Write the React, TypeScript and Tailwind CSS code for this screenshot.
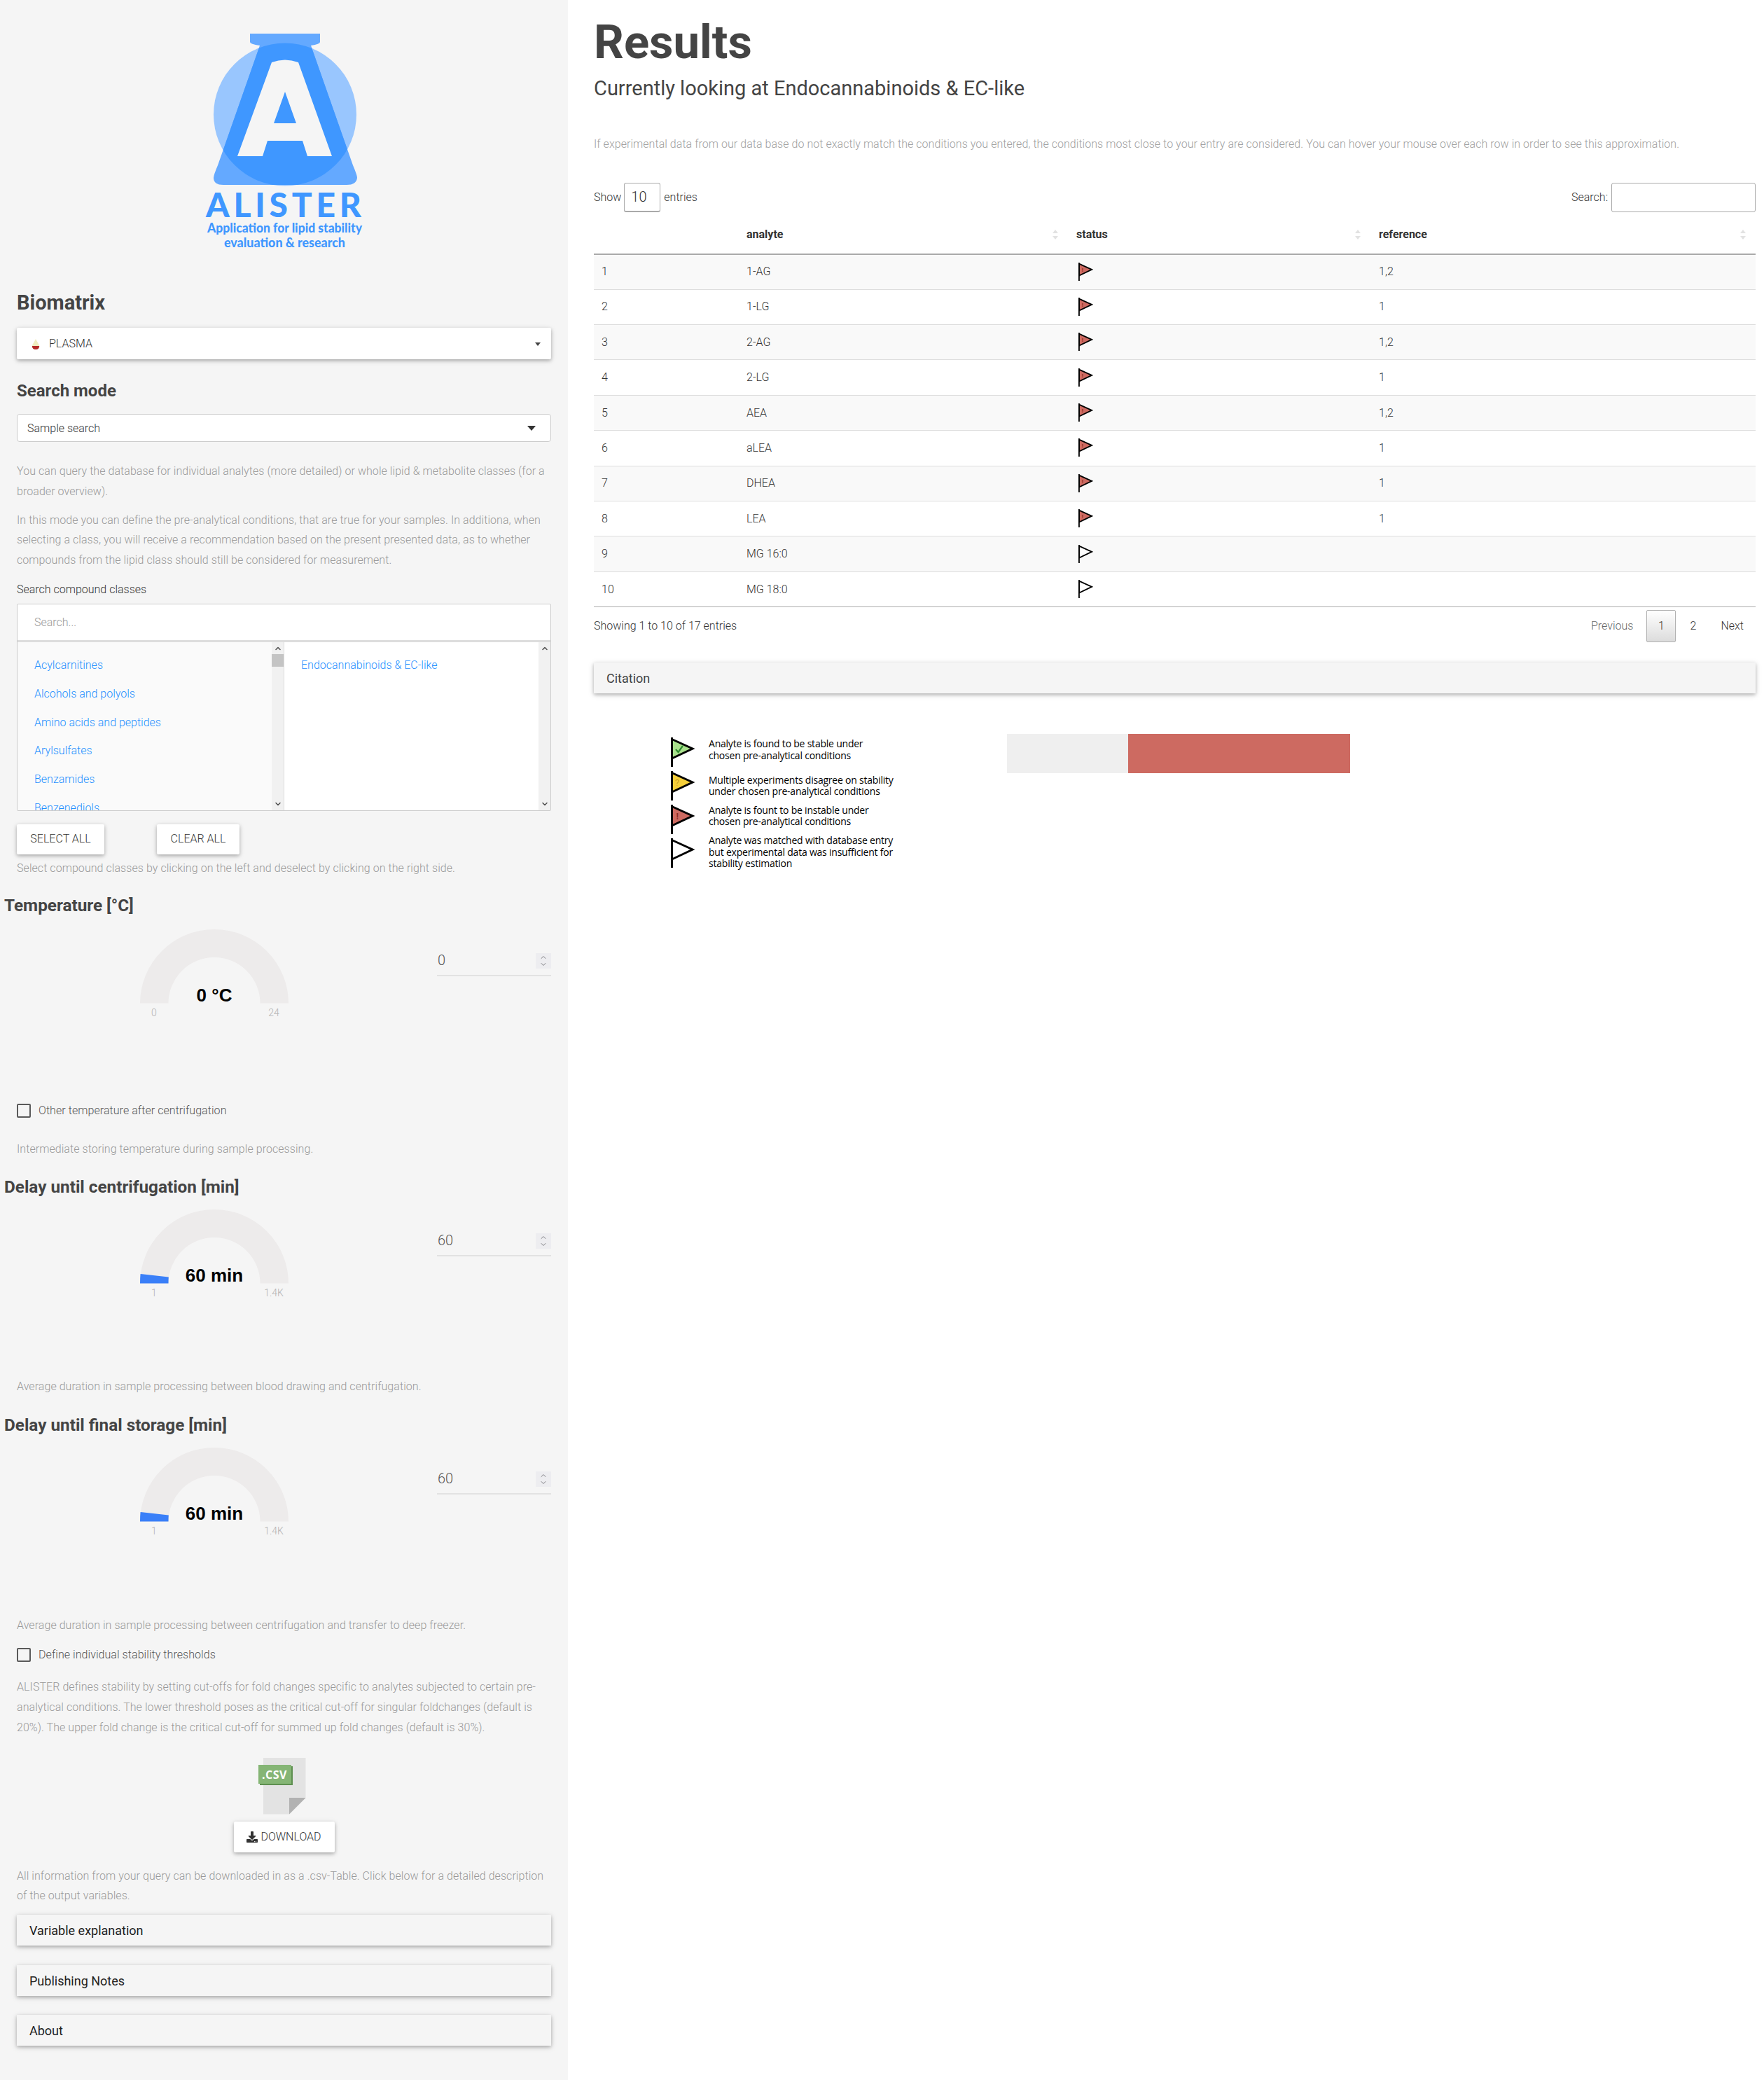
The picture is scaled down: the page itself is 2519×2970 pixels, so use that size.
import { ChevronDown, ChevronUp } from 'lucide-react';
import { FaDownload } from 'react-icons/fa';

const rows = [
  { id: 1, name: '1-AG', status: 'red', ref: '1,2' },
  { id: 2, name: '1-LG', status: 'red', ref: '1' },
  { id: 3, name: '2-AG', status: 'red', ref: '1,2' },
  { id: 4, name: '2-LG', status: 'red', ref: '1' },
  { id: 5, name: 'AEA', status: 'red', ref: '1,2' },
  { id: 6, name: 'aLEA', status: 'red', ref: '1' },
  { id: 7, name: 'DHEA', status: 'red', ref: '1' },
  { id: 8, name: 'LEA', status: 'red', ref: '1' },
  { id: 9, name: 'MG 16:0', status: 'none', ref: '' },
  { id: 10, name: 'MG 18:0', status: 'none', ref: '' },
];

const classes = ['Acylcarnitines', 'Alcohols and polyols', 'Amino acids and peptides', 'Arylsulfates', 'Benzamides', 'Benzenediols'];

const cardShadow = 'shadow-[0_2px_5px_rgba(0,0,0,0.26),0_2px_10px_rgba(0,0,0,0.1)]';

function Logo() {
  const flask = 'M356 48 H456 V60 Q456 63 443 65 L503 236 Q509 250 509 254 Q508 264 494 264 H318 Q304 264 304 254 Q304 250 310 236 L370 65 Q356 63 356 60 Z';
  const letter = 'M387 89 Q406 82 425 89 L473 223 H438 L431 201 H381 L374 223 H338 Z M406 131 L390 176 H422 Z';
  return (
    <svg width="230" height="320" viewBox="290 40 230 320">
      <defs>
        <clipPath id="flask-clip">
          <path d={flask} />
        </clipPath>
      </defs>
      <circle cx="406" cy="163.5" r="102" fill="#99c6fe" />
      <path d={flask} fill="#64a9ff" />
      <circle cx="406" cy="163.5" r="102" fill="#3f97ff" clipPath="url(#flask-clip)" />
      <path d={letter} fill="#f5f5f5" fillRule="evenodd" />
      <g fill="#3f97ff" fontFamily="Lato, sans-serif" fontWeight="900">
        <text x="293" y="310" fontSize="48" textLength="222" lengthAdjust="spacing">ALISTER</text>
        <text x="295" y="332" fontSize="19" textLength="221" lengthAdjust="spacingAndGlyphs">Application for lipid stability</text>
        <text x="319" y="353" fontSize="19" textLength="173" lengthAdjust="spacingAndGlyphs">evaluation &amp; research</text>
      </g>
    </svg>
  );
}

function Flag({ kind, className }: { kind: string; className: string }) {
  const fill = kind === 'green' ? '#a9e08c' : kind === 'yellow' ? '#f5cf3a' : kind === 'red' ? '#cd6a61' : '#ffffff';
  return (
    <svg viewBox="0 0 34 42" className={className}>
      <polygon points="1.5,2.5 31,16 1.5,30" fill={fill} stroke="#000" strokeWidth="3" />
      <line x1="1.5" y1="0" x2="1.5" y2="42" stroke="#000" strokeWidth="3" />
      {kind === 'green' && <path d="M7 17 L10.5 21 L17 12" fill="none" stroke="#2e8b2e" strokeWidth="2.2" />}
      {kind === 'yellow' && <text x="6" y="21" fontSize="13" fill="#b8901c" fontFamily="Roboto, sans-serif">?</text>}
      {kind === 'red' && <text x="7.5" y="21" fontSize="13" fill="#8a2a24" fontFamily="Roboto, sans-serif" fontWeight="700">!</text>}
    </svg>
  );
}

function Gauge({ value, min, max, filled }: { value: string; min: string; max: string; filled?: boolean }) {
  return (
    <svg width="212" height="130" viewBox="0 0 212 130" className="shrink-0">
      <path d="M0 105.5 A106 105.5 0 0 1 212 105.5 H171.5 A65.5 65.5 0 0 0 40.5 105.5 Z" fill="#edebeb" />
      {filled && <path d="M0 105.5 Q0 98 0.6 92 L40.8 96.5 Q40.5 101 40.5 105.5 Z" fill="#3a7ff8" />}
      <text x="106" y="103" textAnchor="middle" fontSize="26" fontWeight="700" fontFamily="Liberation Sans, sans-serif" fill="#010101">{value}</text>
      <text x="20" y="124" textAnchor="middle" fontSize="14" fontFamily="Roboto, sans-serif" fill="#b3b3b3">{min}</text>
      <text x="191" y="124" textAnchor="middle" fontSize="14" fontFamily="Roboto, sans-serif" fill="#b3b3b3">{max}</text>
    </svg>
  );
}

function GaugeRow({ value, min, max, input, filled, height }: { value: string; min: string; max: string; input: string; filled?: boolean; height: string }) {
  return (
    <div className={`flex items-start ${height}`}>
      <div className="ml-[176px]">
        <Gauge value={value} min={min} max={max} filled={filled} />
      </div>
      <div className="ml-auto mt-[34px] flex h-[33px] w-[163px] items-start justify-between border-b-2 border-[#e2e2e2] pl-px">
        <span className="text-[20px] leading-[20px] text-[#555]">{input}</span>
        <div className="flex h-[22px] w-[22px] flex-col items-center justify-center bg-[#ededf0] text-[#6f6f74]">
          <ChevronUp size={12} strokeWidth={1.8} className="-mb-[1px]" />
          <ChevronDown size={12} strokeWidth={1.8} className="-mt-[1px]" />
        </div>
      </div>
    </div>
  );
}

function Help({ children, className = '' }: { children: React.ReactNode; className?: string }) {
  return <p className={`text-[16px] leading-[28.8px] tracking-[0.06px] text-[#999] ${className}`}>{children}</p>;
}

function SectionTitle({ children, className = '' }: { children: React.ReactNode; className?: string }) {
  return <h2 className={`-ml-[18px] text-[24.3px] font-bold leading-[30px] text-[#444] ${className}`}>{children}</h2>;
}

function Check({ label, className = '' }: { label: string; className?: string }) {
  return (
    <label className={`flex h-[20px] items-center gap-[11px] ${className}`}>
      <span className="h-[20px] w-[20px] rounded-[2px] border-2 border-[#5a5a5a]" />
      <span className="text-[16px] tracking-[0.06px] text-[#555]">{label}</span>
    </label>
  );
}

function Accordion({ title, className = '' }: { title: string; className?: string }) {
  return (
    <div className={`flex h-[44px] items-center bg-[#f5f5f5] px-[18px] text-[18px] font-normal text-[#222] ${cardShadow} ${className}`}>
      {title}
    </div>
  );
}

function ListScrollbar() {
  return (
    <div className="flex h-full w-[17px] shrink-0 flex-col items-center justify-between bg-[#f1f1f1] py-[3px] text-[#505050]">
      <ChevronUp size={12} strokeWidth={3} />
      <ChevronDown size={12} strokeWidth={3} />
    </div>
  );
}

function SortArrows() {
  return (
    <span className="flex flex-col gap-[4px]">
      <span className="h-0 w-0 border-x-[4px] border-b-[5px] border-x-transparent border-b-[#e2e2e2]" />
      <span className="h-0 w-0 border-x-[4px] border-t-[5px] border-x-transparent border-t-[#e2e2e2]" />
    </span>
  );
}

function HeaderCell({ label }: { label: string }) {
  return (
    <th className="pl-3 pr-[14px] pt-[6px] text-left text-[16px] font-bold text-[#333]">
      <div className="flex items-center justify-between">
        <span>{label}</span>
        <SortArrows />
      </div>
    </th>
  );
}

function LegendRow({ kind, lines, className = '' }: { kind: string; lines: string[]; className?: string }) {
  return (
    <div className="flex h-[42px] items-center gap-[20px]">
      <Flag kind={kind} className="h-[42px] w-[34px] shrink-0" />
      <div className={`font-['Open_Sans',sans-serif] text-[14px] font-normal leading-[16.5px] tracking-[-0.22px] text-black ${className}`}>
        {lines.map(line => (
          <div key={line}>{line}</div>
        ))}
      </div>
    </div>
  );
}

function Sidebar() {
  return (
    <aside className="h-[2970px] w-[811px] shrink-0 bg-[#f5f5f5] px-6 pt-[40px]">
      <div className="flex justify-center">
        <Logo />
      </div>

      <h1 className="mt-[54px] text-[29px] font-bold leading-[36px] text-[#444]">Biomatrix</h1>
      <div className={`mt-[18px] flex h-[45px] items-center justify-between rounded-[2px] bg-white pl-[21px] pr-[15px] pt-px ${cardShadow}`}>
        <span className="flex items-center gap-[13px] text-[16px] text-[#333]">
          <svg width="12" height="15" viewBox="0 0 12 15">
            <path d="M6 0 L11 9 H1 Z M1 9 H11 Q11.5 10 11 12 Q10 15 6 15 Q2 15 1 12 Q0.5 10 1 9 Z" fill="#efeec0" />
            <path d="M0.8 10 H11.2 Q11 15 6 15 Q1 15 0.8 10 Z" fill="#b52b27" />
          </svg>
          PLASMA
        </span>
        <span className="h-0 w-0 border-x-[4px] border-t-[5px] border-x-transparent border-t-[#444]" />
      </div>

      <h2 className="mt-[30px] text-[24px] font-bold leading-[30px] text-[#444]">Search mode</h2>
      <div className="mt-[18px] flex h-[40px] items-center justify-between rounded-[4px] border border-[#ccc] bg-white pl-[14px] pr-[21px] pt-px text-[16px] text-[#333]">
        Sample search
        <span className="h-0 w-0 border-x-[6px] border-t-[7px] border-x-transparent border-t-[#333]" />
      </div>

      <Help className="mt-[28px]">
        You can query the database for individual analytes (more detailed) or whole lipid &amp; metabolite classes (for a broader overview).
      </Help>
      <Help className="mt-[12px]">
        In this mode you can define the pre-analytical conditions, that are true for your samples. In additiona, when selecting a class, you will receive a recommendation based on the present presented data, as to whether compounds from the lipid class should still be considered for measurement.
      </Help>

      <div className="mt-[15px] text-[16px] leading-[24px] text-[#333]">Search compound classes</div>
      <div className="mt-[8px] h-[296px] overflow-hidden rounded-[2px] border border-[#ccc] bg-white">
        <div className="flex h-[54px] items-center border-b-[3px] border-[#ddd] pl-[24px] pt-[2px] text-[16px] text-[#999]">Search...</div>
        <div className="flex h-[240px]">
          <div className="flex w-[381px] border-r border-[#ddd] bg-[#fafafa]">
            <div className="flex-1 overflow-hidden pl-[24px] pt-[13px] text-[16px] leading-[40.8px] text-[#1e90ff]">
              {classes.map(c => (
                <div key={c}>{c}</div>
              ))}
            </div>
            <div className="relative">
              <ListScrollbar />
              <div className="absolute left-0 top-[17px] h-[18px] w-[17px] bg-[#c4c4c4]" />
            </div>
          </div>
          <div className="flex flex-1">
            <div className="flex-1 pl-[24px] pt-[13px] text-[16px] leading-[40.8px] text-[#1e90ff]">Endocannabinoids &amp; EC-like</div>
            <ListScrollbar />
          </div>
        </div>
      </div>

      <div className="mt-[19px] flex gap-[75px]">
        <button className={`h-[43px] w-[125px] rounded-[2px] bg-white text-[16px] text-[#333] ${cardShadow}`}>SELECT ALL</button>
        <button className={`h-[43px] w-[118px] rounded-[2px] bg-white text-[16px] text-[#333] ${cardShadow}`}>CLEAR ALL</button>
      </div>
      <Help className="mt-[6px]">Select compound classes by clicking on the left and deselect by clicking on the right side.</Help>

      <SectionTitle className="mt-[23px]">Temperature [°C]</SectionTitle>
      <div className="mt-[19px]">
        <GaugeRow value="0 °C" min="0" max="24" input="0" height="h-[249px]" />
      </div>
      <Check label="Other temperature after centrifugation" />
      <Help className="mt-[31px]">Intermediate storing temperature during sample processing.</Help>

      <SectionTitle className="mt-[24px]">Delay until centrifugation [min]</SectionTitle>
      <div className="mt-[17px]">
        <GaugeRow value="60 min" min="1" max="1.4K" input="60" filled height="h-[239px]" />
      </div>
      <Help>Average duration in sample processing between blood drawing and centrifugation.</Help>

      <SectionTitle className="mt-[26px]">Delay until final storage [min]</SectionTitle>
      <div className="mt-[17px]">
        <GaugeRow value="60 min" min="1" max="1.4K" input="60" filled height="h-[240px]" />
      </div>
      <Help>Average duration in sample processing between centrifugation and transfer to deep freezer.</Help>

      <Check label="Define individual stability thresholds" className="mt-[17px]" />
      <Help className="mt-[22px]">
        ALISTER defines stability by setting cut-offs for fold changes specific to analytes subjected to certain pre-analytical conditions. The lower threshold poses as the critical cut-off for singular foldchanges (default is 20%). The upper fold change is the critical cut-off for summed up fold changes (default is 30%).
      </Help>

      <div className="mt-[28px] flex justify-center">
        <svg width="77" height="81" viewBox="367 2510 77 81">
          <path d="M376 2510 H436.5 V2567 L413 2590.5 H376 Z" fill="#e3e3e3" />
          <path d="M413 2567 H436.5 L413 2590.5 Z" fill="#b2b2b2" />
          <rect x="371" y="2522" width="47" height="27" fill="#5e8f50" />
          <rect x="369" y="2520" width="47" height="27" fill="#85b575" />
          <text x="374" y="2540" fontSize="16" fontWeight="700" fontFamily="Open Sans, sans-serif" fill="#fff" letterSpacing="0.5">.CSV</text>
        </svg>
      </div>
      <div className="mt-[10px] flex justify-center">
        <button className={`flex h-[44px] w-[144px] items-center justify-center gap-[4px] rounded-[2px] bg-white text-[16px] text-[#333] ${cardShadow}`}>
          <FaDownload size={16} />
          DOWNLOAD
        </button>
      </div>
      <Help className="mt-[20px]">
        All information from your query can be downloaded in as a .csv-Table. Click below for a detailed description of the output variables.
      </Help>

      <Accordion title="Variable explanation" className="mt-[12px]" />
      <Accordion title="Publishing Notes" className="mt-[28px]" />
      <Accordion title="About" className="mt-[27px]" />
    </aside>
  );
}

function Results() {
  return (
    <main className="flex-1 bg-white pl-[37px] pr-[12px] pt-[20px] text-[#333]">
      <h1 className="text-[67px] font-bold leading-[80px] text-[#444]">Results</h1>
      <h2 className="mt-[6px] text-[29px] font-normal leading-[40px] text-[#444]">Currently looking at Endocannabinoids &amp; EC-like</h2>
      <p className="mt-[46px] text-[16px] leading-[28.8px] tracking-[0.045px] text-[#a0a0a0]">
        If experimental data from our data base do not exactly match the conditions you entered, the conditions most close to your entry are considered. You can hover your mouse over each row in order to see this approximation.
      </p>

      <div className="mt-[40px] flex h-[42px] items-center justify-between text-[16px]">
        <div className="flex items-center">
          Show
          <span className="ml-[4px] mr-[5px] flex h-[42px] w-[52px] items-center rounded-[3px] border border-b-2 border-[#aaa] pl-[9px] text-[20px]">10</span>
          entries
        </div>
        <div className="flex items-center gap-[5px]">
          Search:
          <span className="h-[42px] w-[206px] rounded-[3px] border border-[#aaa]" />
        </div>
      </div>

      <table className="w-full table-fixed border-collapse">
        <colgroup>
          <col className="w-[206px]" />
          <col className="w-[471px]" />
          <col className="w-[432px]" />
          <col />
        </colgroup>
        <thead>
          <tr className="h-[60px] border-b-2 border-[#aaa]">
            <th />
            <HeaderCell label="analyte" />
            <HeaderCell label="status" />
            <HeaderCell label="reference" />
          </tr>
        </thead>
        <tbody>
          {rows.map(r => (
            <tr key={r.id} className={`h-[50.4px] border-b border-[#ddd] text-[16px] last:border-[#aaa] ${r.id % 2 === 1 ? 'bg-[#f9f9f9]' : 'bg-white'}`}>
              <td className="pl-[11px]">{r.id}</td>
              <td className="pl-3">{r.name}</td>
              <td className="pl-[15px]">
                <Flag kind={r.status} className="-mt-[1px] h-[26px] w-[21px]" />
              </td>
              <td className="pl-3">{r.ref}</td>
            </tr>
          ))}
        </tbody>
      </table>

      <div className="mt-[4px] flex h-[46px] items-center justify-between text-[16px]">
        <span>Showing 1 to 10 of 17 entries</span>
        <div className="mr-[17px] flex items-center">
          <span className="text-[#666]">Previous</span>
          <span className="ml-[19px] flex h-[46px] w-[42px] items-center justify-center rounded-[2px] border border-[#b0b0b0] bg-linear-to-b from-white to-[#dcdcdc]">1</span>
          <span className="ml-[20px] w-[8px] text-center">2</span>
          <span className="ml-[36px]">Next</span>
        </div>
      </div>

      <div className={`mt-[29px] flex h-[44px] items-center bg-[#f5f5f5] pl-[18px] text-[18px] font-normal text-[#444] ${cardShadow}`}>Citation</div>

      <div className="mt-[58px] flex items-start pl-[110px]">
        <div className="mt-[5px] flex w-[479.5px] shrink-0 flex-col gap-[6px]">
          <LegendRow kind="green" lines={['Analyte is found to be stable under', 'chosen pre-analytical conditions']} className="pb-[7px]" />
          <LegendRow kind="yellow" lines={['Multiple experiments disagree on stability', 'under chosen pre-analytical conditions']} />
          <LegendRow kind="red" lines={['Analyte is fount to be instable under', 'chosen pre-analytical conditions']} className="pb-[10px]" />
          <LegendRow kind="none" lines={['Analyte was matched with database entry', 'but experimental data was insufficient for', 'stability estimation']} className="pb-[2px]" />
        </div>
        <div className="flex h-[56px] w-[490.5px]">
          <div className="w-[173px] bg-[#efefef]" />
          <div className="flex-1 bg-[#cd6a61]" />
        </div>
      </div>
    </main>
  );
}

export default function App() {
  return (
    <div className="flex min-h-screen font-['Roboto',sans-serif] font-light">
      <Sidebar />
      <Results />
    </div>
  );
}
